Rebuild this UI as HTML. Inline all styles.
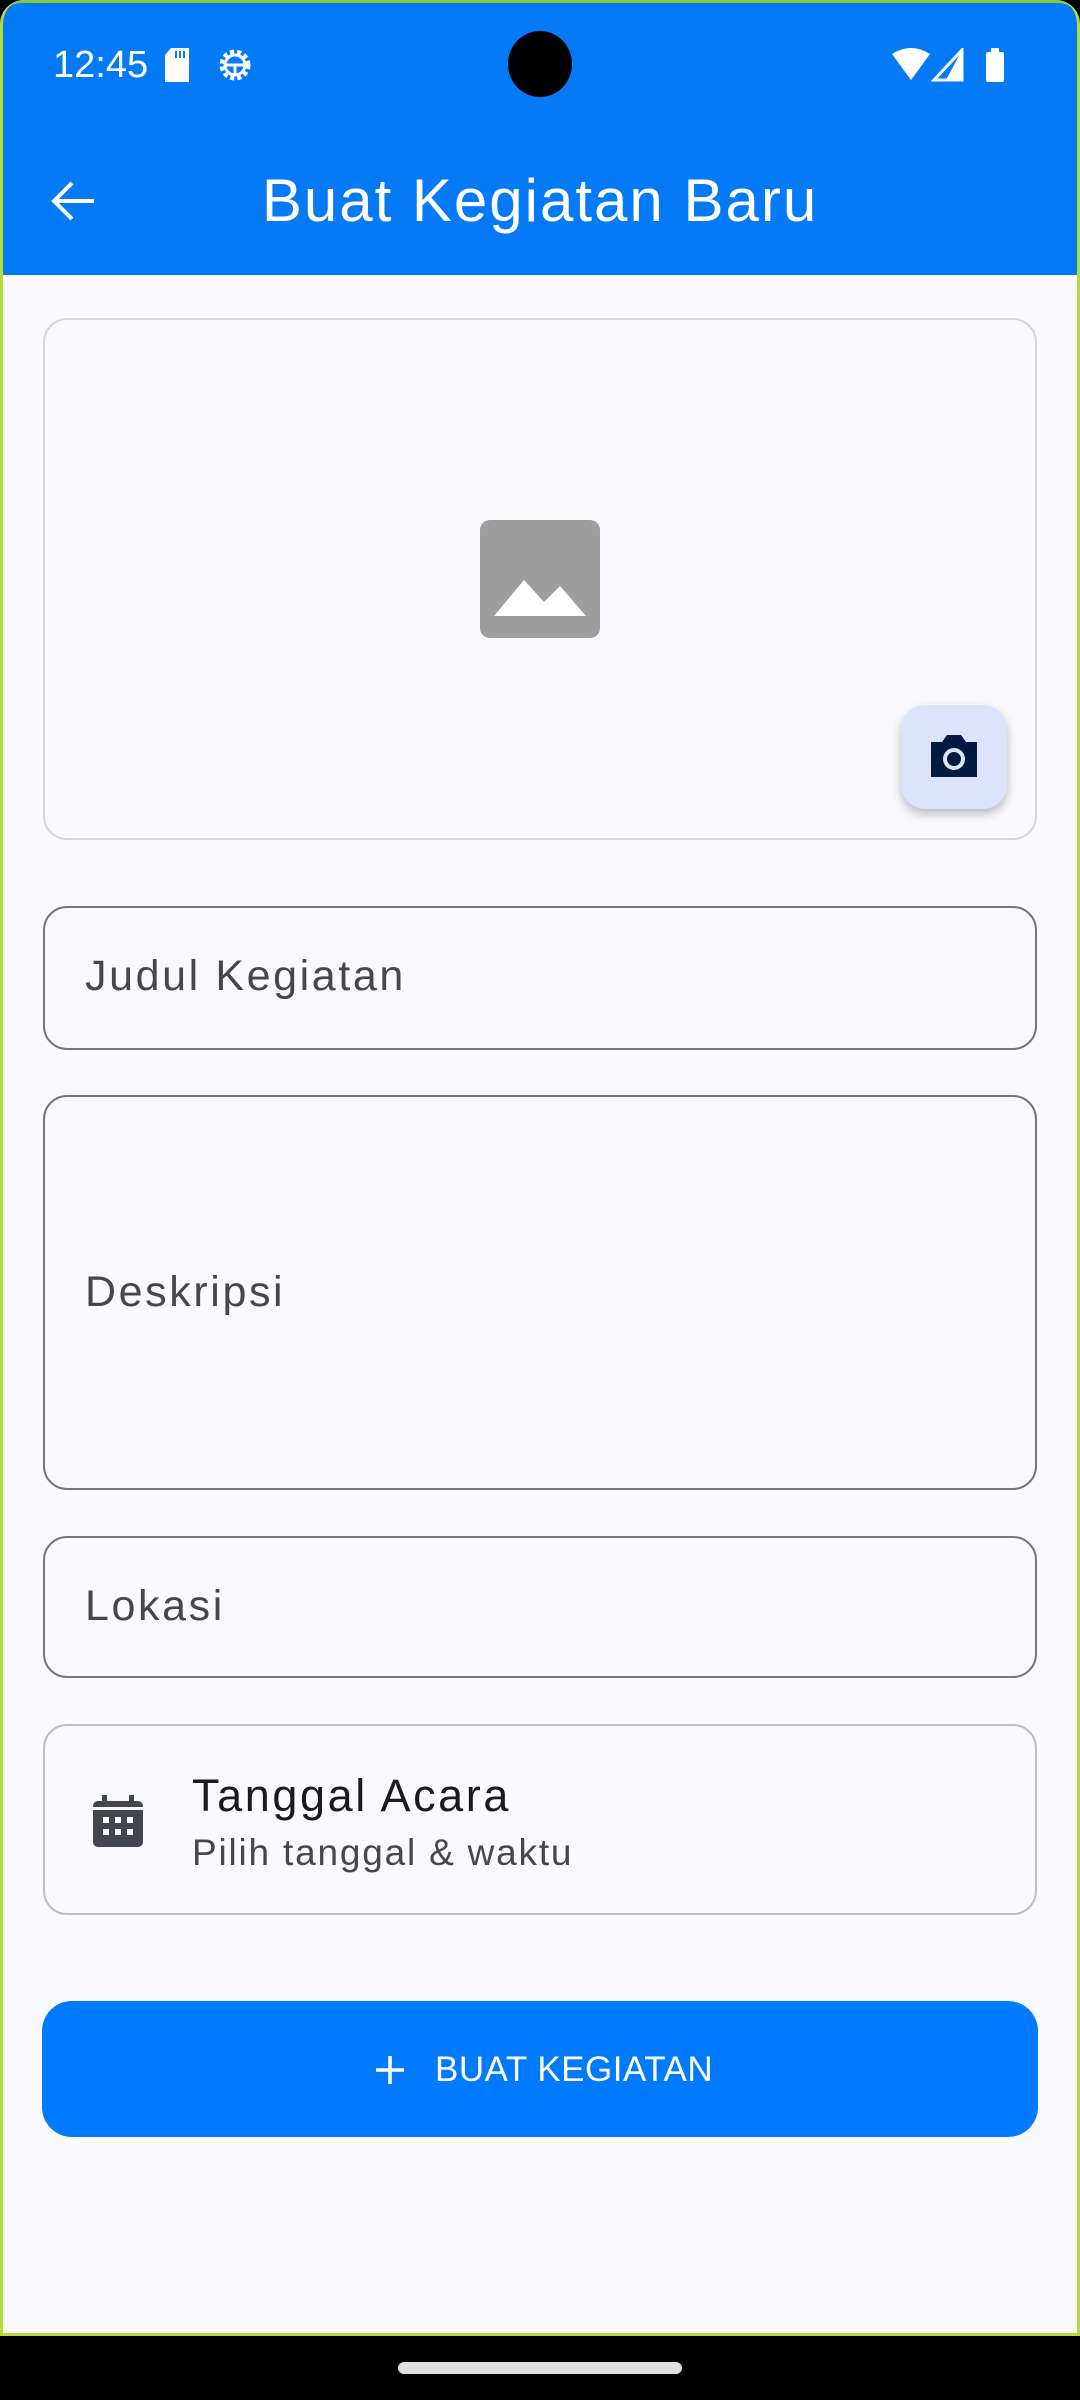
<!DOCTYPE html>
<html><head><meta charset="utf-8"><style>
*{margin:0;padding:0;box-sizing:border-box}
body{width:1080px;height:2400px;background:#000;position:relative;overflow:hidden;font-family:"Liberation Sans",sans-serif}
.screen{position:absolute;left:0;top:0;width:1080px;height:2336px;background:#f9f9fe;border:3px solid #b5dc3a;border-top:none;border-radius:24px 24px 0 0;overflow:hidden}
.bar{position:absolute;left:-3px;top:0;width:1080px;height:275px;background:#047af6;border-radius:22px 22px 0 0;border-top:3px solid #8cc63f}
.abs{position:absolute}
.field{position:absolute;left:40px;width:994px;border:2px solid #79747e;border-radius:24px}
.lbl{position:absolute;left:82px;font-size:43px;color:#49454f;letter-spacing:2.6px}
</style></head><body>
<div class="screen">
<div class="bar"></div>
<div class="abs" style="left:50px;top:44px;font-size:38px;color:#fff">12:45</div>
<svg class="abs" style="left:160px;top:48px" width="28" height="34" viewBox="0 0 28 34"><path d="M8 0H26V34H2V7Z" fill="#fff"/><rect x="12" y="3" width="2" height="7" fill="#047af6"/><rect x="16" y="3" width="2" height="7" fill="#047af6"/><rect x="20" y="3" width="2" height="7" fill="#047af6"/></svg>
<svg class="abs" style="left:212px;top:46px" width="40" height="38" viewBox="0 0 40 38"><circle cx="20" cy="19" r="13" fill="none" stroke="#fff" stroke-width="5" stroke-dasharray="4 3"/><circle cx="20" cy="19" r="10" fill="none" stroke="#fff" stroke-width="3"/><path d="M10 19H30M20 19V30" stroke="#fff" stroke-width="3"/></svg>
<div class="abs" style="left:505px;top:31px;width:64px;height:66px;border-radius:50%;background:#000"></div>
<svg class="abs" style="left:889px;top:48px" width="112" height="34" viewBox="0 0 112 34"><path d="M0 6Q19-6 38 6L19 32Z" fill="#fff"/><path d="M70 2V32H42Z" fill="none" stroke="#fff" stroke-width="3"/><path d="M70 2V32H54Z" fill="#fff"/><rect x="94" y="4" width="18" height="30" rx="2" fill="#fff"/><rect x="99" y="0" width="8" height="5" fill="#fff"/></svg>
<svg class="abs" style="left:47px;top:180px" width="46" height="42" viewBox="0 0 46 42"><path d="M44 21H4M22 3L4 21L22 39" fill="none" stroke="#fff" stroke-width="4"/></svg>
<div class="abs" style="left:-3px;width:1080px;top:166px;text-align:center;font-size:60px;color:#fff;letter-spacing:2px">Buat Kegiatan Baru</div>

<div class="abs" style="left:40px;top:318px;width:994px;height:522px;border:2px solid #d6d6da;border-radius:24px"></div>
<svg class="abs" style="left:477px;top:520px" width="120" height="118" viewBox="0 0 120 118"><rect width="120" height="118" rx="10" fill="#9e9e9e"/><path d="M14 96L44 60L64 82L80 66L106 96Z" fill="#fff"/></svg>
<div class="abs" style="left:898px;top:705px;width:106px;height:104px;border-radius:24px;background:#dde3fb;box-shadow:0 5px 10px rgba(0,0,0,.25)"></div>
<svg class="abs" style="left:924px;top:732px" width="54" height="48" viewBox="0 0 54 48"><path d="M4 10H15L20 3H34L39 10H50V45H4Z" fill="#001a41"/><circle cx="27" cy="27" r="11" fill="#dde3fb"/><circle cx="27" cy="27" r="7" fill="#001a41"/></svg>

<div class="field" style="top:906px;height:144px"></div>
<div class="lbl" style="top:952px">Judul Kegiatan</div>
<div class="field" style="top:1095px;height:395px"></div>
<div class="lbl" style="top:1268px">Deskripsi</div>
<div class="field" style="top:1536px;height:142px"></div>
<div class="lbl" style="top:1582px">Lokasi</div>

<div class="abs" style="left:40px;top:1724px;width:994px;height:191px;border:2px solid #bdbdc2;border-radius:24px"></div>
<svg class="abs" style="left:90px;top:1795px" width="50" height="52" viewBox="0 0 50 52"><rect x="0" y="6" width="50" height="46" rx="5" fill="#44464f"/><rect x="9" y="0" width="5" height="10" fill="#44464f"/><rect x="36" y="0" width="5" height="10" fill="#44464f"/><rect x="0" y="12" width="50" height="3" fill="#f9f9fe"/><g fill="#f9f9fe"><rect x="10" y="22" width="6" height="6"/><rect x="22" y="22" width="6" height="6"/><rect x="34" y="22" width="6" height="6"/><rect x="10" y="34" width="6" height="6"/><rect x="22" y="34" width="6" height="6"/><rect x="34" y="34" width="6" height="6"/></g></svg>
<div class="abs" style="left:189px;top:1770px;font-size:45px;color:#1b1b1f;letter-spacing:2.6px">Tanggal Acara</div>
<div class="abs" style="left:189px;top:1832px;font-size:37px;color:#49454f;letter-spacing:1.8px">Pilih tanggal &amp; waktu</div>

<div class="abs" style="left:39px;top:2001px;width:996px;height:136px;border-radius:30px;background:#007aff"></div>
<svg class="abs" style="left:373px;top:2056px" width="28" height="28" viewBox="0 0 28 28"><path d="M14 0V28M0 14H28" stroke="#fff" stroke-width="3.5"/></svg>
<div class="abs" style="left:432px;top:2050px;font-size:35px;color:#fff;letter-spacing:0.5px">BUAT KEGIATAN</div>
</div>
<div class="abs" style="left:398px;top:2362px;width:284px;height:12px;border-radius:6px;background:#e0e0e0"></div>
</body></html>
